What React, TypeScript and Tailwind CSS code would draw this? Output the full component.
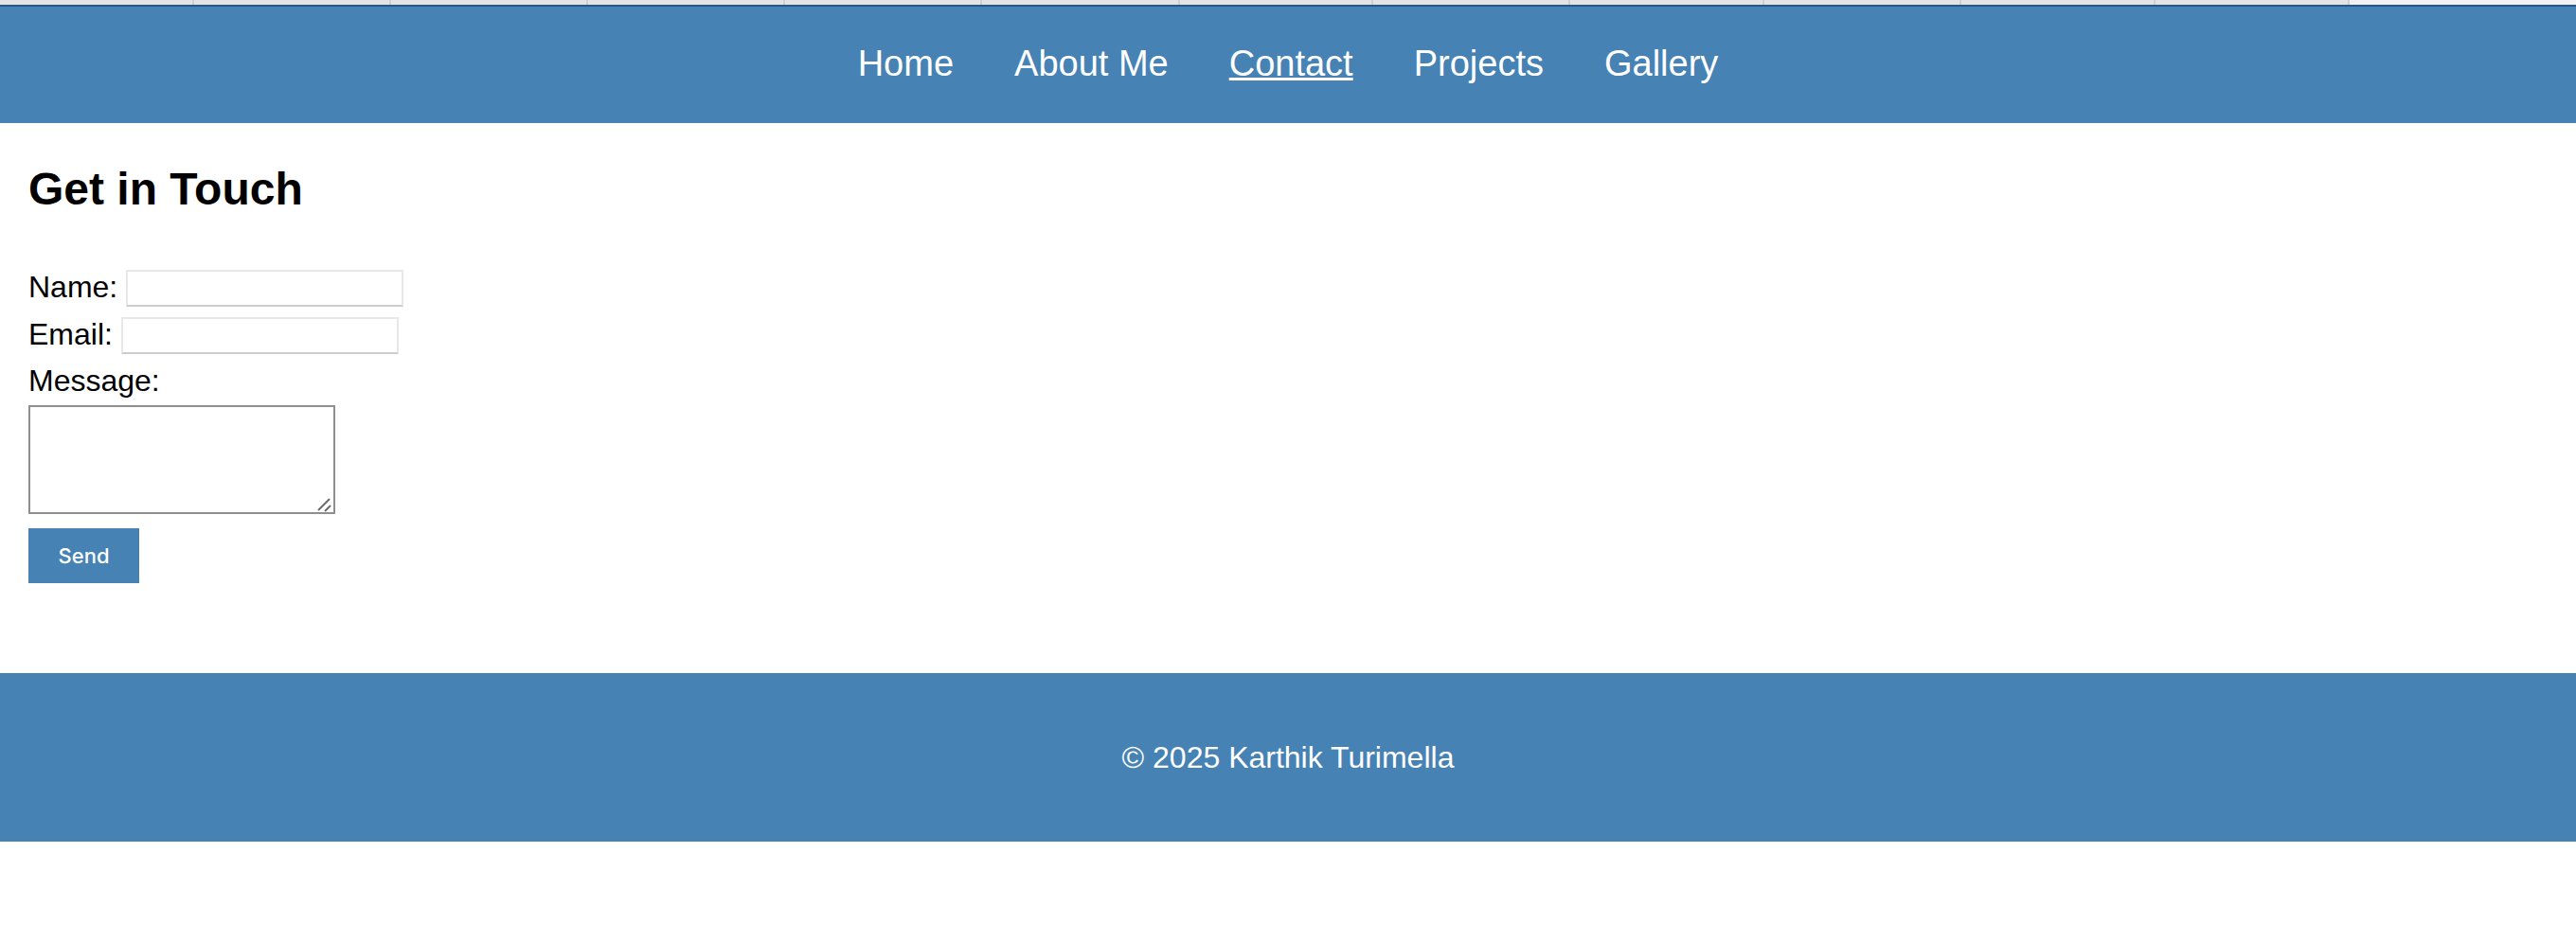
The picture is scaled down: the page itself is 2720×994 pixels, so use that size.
import { useState } from "react"

const tabWidths = [205, 208, 208, 208, 208, 209, 204, 208, 205, 208, 205, 205]

const navItems = [
  { href: "#home", label: "Home" },
  { href: "#about", label: "About Me" },
  { href: "#contact", label: "Contact", active: true },
  { href: "#projects", label: "Projects" },
  { href: "#gallery", label: "Gallery" },
]

export default function App() {
  const [name, setName] = useState("")
  const [email, setEmail] = useState("")
  const [message, setMessage] = useState("")

  return (
    <div className="min-h-[994px] w-full bg-white font-['Liberation_Sans',Arial,sans-serif] text-black">
      {/* Strip above the page */}
      <div className="flex h-[5px]">
        {tabWidths.map((w, i) => (
          <div
            key={i}
            className="shrink-0 border-r-2 border-[#d0d0d0] bg-[#e4e4e4]"
            style={{ width: w }}
          />
        ))}
        <div className="flex-1 bg-[#f2f2f2]" />
      </div>
      <div className="h-[2px] bg-[#25598b]" />

      {/* Navigation */}
      <nav className="flex h-[123px] items-center justify-center gap-[64px] bg-[#4682b4] pb-[3px]">
        {navItems.map((item) => (
          <a
            key={item.href}
            href={item.href}
            className={
              item.active
                ? "text-[38px] text-white underline decoration-[2.5px] underline-offset-[2px]"
                : "text-[38px] text-white no-underline"
            }
          >
            {item.label}
          </a>
        ))}
      </nav>

      {/* Contact form */}
      <main className="px-[30px]">
        <h2 className="mt-[42px] text-[48px] font-bold leading-[55px]">Get in Touch</h2>

        <form className="mt-[52px]" onSubmit={(e) => e.preventDefault()}>
          <div className="flex h-[50px] items-center gap-[9px]">
            <label htmlFor="name" className="mb-[2px] text-[32px] leading-[37px]">
              Name:
            </label>
            <input
              id="name"
              value={name}
              onChange={(e) => setName(e.target.value)}
              className="h-[39px] w-[293px] border-2 border-[#e8e8e8] border-b-[#cdcdcd] bg-white px-2 text-[26px] outline-none"
            />
          </div>
          <div className="flex h-[50px] items-center gap-[9px]">
            <label htmlFor="email" className="mb-[2px] text-[32px] leading-[37px]">
              Email:
            </label>
            <input
              id="email"
              type="email"
              value={email}
              onChange={(e) => setEmail(e.target.value)}
              className="h-[39px] w-[293px] border-2 border-[#e8e8e8] border-b-[#cdcdcd] bg-white px-2 text-[26px] outline-none"
            />
          </div>
          <div className="flex h-[49px] items-center">
            <label htmlFor="message" className="mb-[2px] text-[32px] leading-[37px]">
              Message:
            </label>
          </div>
          <div className="relative h-[115px] w-[324px]">
            <textarea
              id="message"
              value={message}
              onChange={(e) => setMessage(e.target.value)}
              className="block h-[115px] w-[324px] resize-none border-2 border-[#8f8f8f] bg-white p-1 text-[26px] outline-none"
            />
            {/* resize grip */}
            <svg
              className="pointer-events-none absolute bottom-[1px] right-[3px] h-[16px] w-[16px]"
              viewBox="0 0 16 16"
            >
              <line x1="1" y1="13" x2="13" y2="1" stroke="#6b6b6b" strokeWidth="2" />
              <line x1="8" y1="14" x2="14" y2="8" stroke="#6b6b6b" strokeWidth="2" />
            </svg>
          </div>
          <button
            type="submit"
            className="mt-[15px] h-[58px] w-[117px] bg-[#4682b4] font-['Inter',sans-serif] text-[22px] font-medium text-white"
          >
            Send
          </button>
        </form>
      </main>

      {/* Footer */}
      <footer className="mt-[95px] flex h-[178px] items-center justify-center bg-[#4682b4]">
        <p className="text-[32px] text-white">© 2025 Karthik Turimella</p>
      </footer>
    </div>
  )
}
